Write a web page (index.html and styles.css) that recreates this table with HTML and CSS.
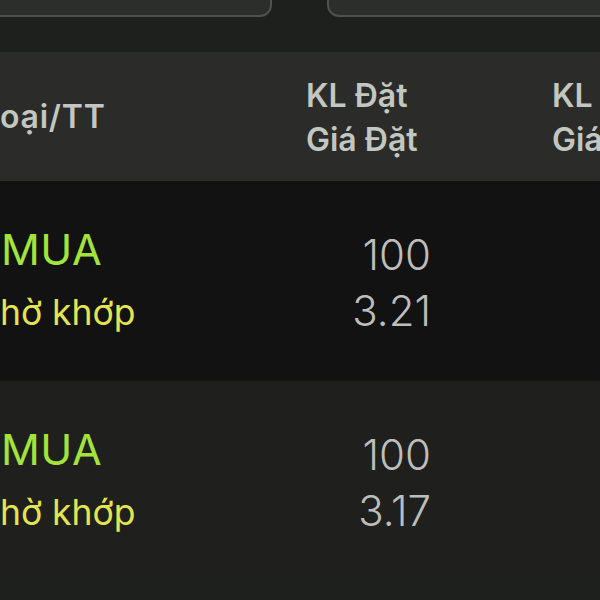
FILE: index.html
```html
<!DOCTYPE html>
<html lang="vi">
<head>
<meta charset="utf-8">
<link rel="stylesheet" href="styles.css">
</head>
<body>
<div class="page">
  <div class="tabs">
    <div class="tab tab-left"></div>
    <div class="tab tab-right"></div>
  </div>
  <div class="table">
    <div class="row head">
      <div class="cell c1"><span class="line">Loại/TT</span></div>
      <div class="cell c2"><span class="line">KL Đặt</span><span class="line">Giá Đặt</span></div>
      <div class="cell c3"><span class="line">KL Khớp</span><span class="line">Giá Khớp</span></div>
    </div>
    <div class="row data dark">
      <div class="cell c1"><span class="side">MUA</span><span class="status">Chờ khớp</span></div>
      <div class="cell c2 num"><span class="line">100</span><span class="line">3.21</span></div>
      <div class="cell c3 num"><span class="line"></span><span class="line"></span></div>
    </div>
    <div class="row data mid">
      <div class="cell c1"><span class="side">MUA</span><span class="status">Chờ khớp</span></div>
      <div class="cell c2 num"><span class="line">100</span><span class="line">3.17</span></div>
      <div class="cell c3 num"><span class="line"></span><span class="line"></span></div>
    </div>
  </div>
</div>
</body>
</html>
```

FILE: styles.css
```css
html, body {
  margin: 0;
  padding: 0;
  background: #1e201d;
  overflow: hidden;
}
.page {
  width: 600px;
  height: 600px;
  overflow: hidden;
  background: #1e201d;
  font-family: Inter, Roboto, "Liberation Sans", sans-serif;
}
.tabs {
  height: 52px;
  display: flex;
  gap: 55px;
  margin-left: -30px;
}
.tab {
  flex-shrink: 0;
  height: 13px;
  margin-top: -20px;
  padding-top: 20px;
  box-sizing: content-box;
  background: #2b2e2a;
  border: 2px solid #4d524b;
  border-radius: 0 0 12px 12px;
}
.tab-left { width: 298px; }
.tab-right { width: 400px; }
.table {
  width: 700px;
}
.row {
  display: grid;
  grid-template-columns: 300px 131px 1fr;
}
.cell {
  display: flex;
  flex-direction: column;
  align-items: flex-start;
}
.head {
  background: #2b2c29;
  height: 129px;
  box-sizing: border-box;
  padding-top: 22px;
  color: #c3c7c1;
  font-size: 32px;
  font-weight: 600;
}
.head .line { line-height: 44px; white-space: nowrap; }
.head .c1 { justify-content: center; padding-bottom: 22px; }
.head .c1 .line { margin-left: -19px; letter-spacing: 0.8px; }
.head .c2 { padding-left: 6px; }
.head .c3 { padding-left: 121px; }
.data {
  height: 200px;
}
.dark { background: #121212; }
.mid { background: #1f201e; }
.data .c1 { padding-top: 36px; }
.side {
  line-height: 64px;
  font-size: 43px;
  color: #a2e43a;
  margin-left: 1px;
  letter-spacing: 0.5px;
  white-space: nowrap;
}
.status {
  line-height: 64px;
  font-size: 35.5px;
  color: #e4e450;
  margin-left: -26px;
  white-space: nowrap;
}
.data .c2 {
  padding-top: 46px;
  align-items: flex-end;
  color: #bdbdbb;
  font-size: 42px;
  font-weight: 300;
}
.data .c2 .line { line-height: 56px; }
```
